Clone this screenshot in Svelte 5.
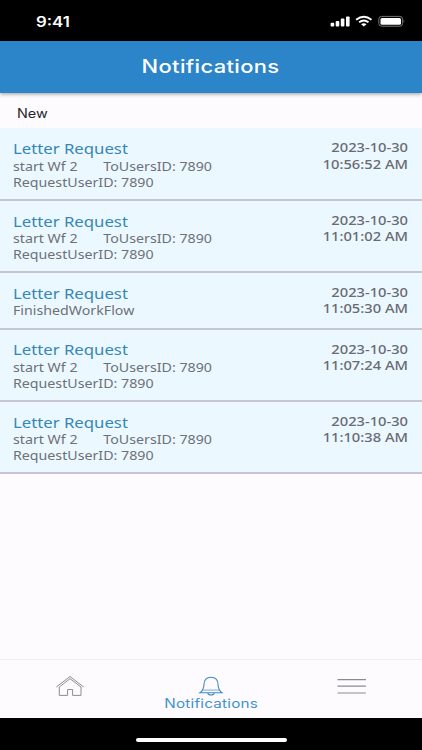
<script lang="ts">
  interface Notification {
    title: string;
    lines: string[];
    date: string;
    time: string;
  }

  const request = ['start Wf 2       ToUsersID: 7890', 'RequestUserID: 7890'];

  const notifications: Notification[] = [
    { title: 'Letter Request', lines: request, date: '2023-10-30', time: '10:56:52 AM' },
    { title: 'Letter Request', lines: request, date: '2023-10-30', time: '11:01:02 AM' },
    { title: 'Letter Request', lines: ['FinishedWorkFlow'], date: '2023-10-30', time: '11:05:30 AM' },
    { title: 'Letter Request', lines: request, date: '2023-10-30', time: '11:07:24 AM' },
    { title: 'Letter Request', lines: request, date: '2023-10-30', time: '11:10:38 AM' }
  ];
</script>

<div class="screen">
  <div class="status">
    <span class="clock">9:41</span>
    <svg width="76" height="14" viewBox="0 0 76 14">
      <g fill="#fff">
        <rect x="1.6" y="7.8" width="3.6" height="3.6" rx="0.9" />
        <rect x="6.7" y="6" width="3.6" height="5.4" rx="0.9" />
        <rect x="11.8" y="3.6" width="3.6" height="7.8" rx="0.9" />
        <rect x="17" y="1.4" width="3.6" height="10" rx="0.9" />
      </g>
      <g fill="none" stroke="#fff" stroke-width="1.9">
        <path d="M27.1 4.7 Q34.8 -1.3 42.5 4.7" />
        <path d="M30.1 7.3 Q34.8 3.7 39.5 7.3" />
      </g>
      <path d="M32.1 9.2 Q34.8 7.3 37.5 9.2 L34.8 11.5Z" fill="#fff" />
      <rect x="49.8" y="1.4" width="23.8" height="9.8" rx="2.8" fill="none" stroke="#77777b" />
      <rect x="51.5" y="2.9" width="20.5" height="6.8" rx="1.5" fill="#fff" />
      <path d="M74.6 4.6 Q76.2 6.2 74.6 7.8Z" fill="#77777b" />
    </svg>
  </div>

  <header><h1>Notifications</h1></header>

  <main>
    <h2><span>New</span></h2>
    <ul>
      {#each notifications as item}
        <li>
          <div class="message">
            <h3>{item.title}</h3>
            {#each item.lines as line}
              <p>{line}</p>
            {/each}
          </div>
          <div class="stamp">
            <span>{item.date}</span>
            <span>{item.time}</span>
          </div>
        </li>
      {/each}
    </ul>
  </main>

  <nav>
    <div class="tab">
      <svg width="30" height="22" viewBox="0 0 30 22" fill="none" stroke="#8d8d91" stroke-width="1">
        <path d="M1.3 12 L15 1.5 L28.7 12" />
        <path d="M4.3 12 V20.4 H12.6 V14.5 H17.6 V20.4 H26 V12 L15 3.7Z" />
      </svg>
    </div>
    <div class="tab active">
      <svg width="26" height="22" viewBox="0 0 26 22" fill="none" stroke="#3f8bc2" stroke-width="1.1">
        <path d="M2 17.8 C5.2 15.6 5.8 13 6 9.5 C6.1 4.5 8.5 2.2 13 2.2 C17.5 2.2 19.9 4.5 20 9.5 C20.2 13 20.8 15.6 24 17.8Z" />
        <path d="M4.7 15.1 H21.3" stroke-width="0.7" />
        <path d="M9.8 18.1 C10.3 20.6 15.7 20.6 16.2 18.1" />
      </svg>
      <span>Notifications</span>
    </div>
    <div class="tab">
      <svg width="30" height="22" viewBox="0 0 30 22" stroke="#8b8b8f" stroke-width="1.2">
        <path d="M0.5 4.6 H28.9 M0.5 11.2 H28.9 M0.5 18 H28.9" />
      </svg>
    </div>
  </nav>

  <div class="home-bar"><i></i></div>
</div>

<style>
  :global(body) {
    margin: 0;
    background: #fdfbfe;
  }

  .screen {
    width: 422px;
    height: 750px;
    display: flex;
    flex-direction: column;
    overflow: hidden;
    background: #fdfbfe;
    font-family: Inter, sans-serif;
  }

  h1,
  h2,
  h3,
  p,
  ul {
    margin: 0;
    padding: 0;
    font-weight: 400;
  }

  .status {
    height: 41px;
    flex-shrink: 0;
    box-sizing: border-box;
    padding: 15px 17px 0 35.5px;
    display: flex;
    justify-content: space-between;
    align-items: flex-start;
    background: #000;
  }

  .clock {
    color: #fff;
    font-size: 14px;
    font-weight: 600;
    line-height: 14px;
    transform: scaleX(1.2);
    transform-origin: left;
  }

  header {
    height: 52px;
    flex-shrink: 0;
    box-sizing: border-box;
    padding-bottom: 1.5px;
    display: flex;
    align-items: center;
    justify-content: center;
    background: #2c84c9;
    box-shadow: 0 1px 4px rgba(0, 0, 0, 0.4);
  }

  h1 {
    color: #fff;
    font-size: 18.3px;
    font-weight: 550;
    letter-spacing: 0.3px;
    line-height: 24px;
    transform: scaleX(1.2);
  }

  main {
    flex: 1;
  }

  h2 {
    height: 35.4px;
    padding: 12px 17px 0;
    box-sizing: border-box;
    color: #252529;
    font-size: 12.5px;
    line-height: 17px;
  }

  h2 span {
    display: inline-block;
    transform: scaleX(1.15);
    transform-origin: left;
  }

  ul {
    list-style: none;
    font-family: 'Noto Sans', sans-serif;
  }

  li {
    display: flex;
    justify-content: space-between;
    padding: 10.8px 14px 8.45px 13px;
    border-bottom: 2px solid #c7c5d0;
    background: #ecf8ff;
  }

  .message {
    transform: scaleX(1.17);
    transform-origin: left;
  }

  h3 {
    color: #3587b5;
    font-size: 14.3px;
    line-height: 19.6px;
  }

  p {
    color: #6d7177;
    font-size: 12.15px;
    line-height: 15.75px;
    white-space: pre;
  }

  .stamp {
    display: flex;
    flex-direction: column;
    align-items: flex-end;
    margin: 1.1px 0 -4px;
    color: #686b71;
    font-size: 12.4px;
    font-weight: 500;
    line-height: 16.4px;
    transform: scaleX(1.185);
    transform-origin: right;
  }

  nav {
    height: 58px;
    flex-shrink: 0;
    display: grid;
    grid-template-columns: repeat(3, 1fr);
    border-top: 1px solid #f1eff3;
  }

  .tab {
    display: flex;
    flex-direction: column;
    align-items: center;
    padding-top: 15px;
  }

  .tab span {
    color: #3f93cf;
    font-size: 12.7px;
    letter-spacing: 0.2px;
    line-height: 14px;
    transform: scaleX(1.2);
  }

  .home-bar {
    height: 32px;
    flex-shrink: 0;
    display: flex;
    justify-content: center;
    background: #000;
  }

  .home-bar i {
    width: 151px;
    height: 4.6px;
    margin-top: 19.5px;
    border-radius: 3px;
    background: #fff;
  }
</style>
